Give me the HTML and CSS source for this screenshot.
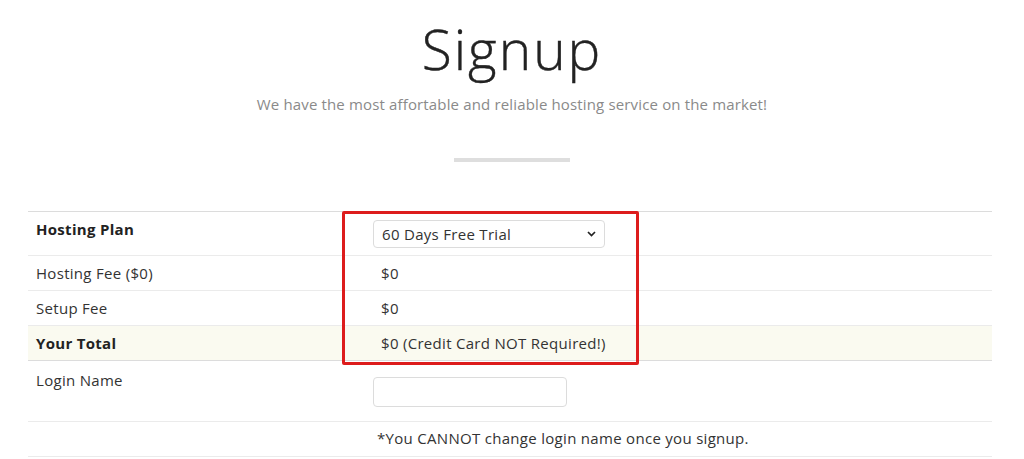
FILE: index.html
```html
<!DOCTYPE html>
<html lang="en">
<head>
<meta charset="utf-8">
<title>Signup</title>
<link rel="stylesheet" href="styles.css">
</head>
<body>
<header class="hero">
  <h1 class="title">Signup</h1>
  <p class="subtitle">We have the most affortable and reliable hosting service on the market!</p>
  <div class="divider"></div>
</header>
<main class="form-wrap">
  <table class="signup">
    <colgroup><col class="c1"><col class="c2"></colgroup>
    <tr class="row-plan">
      <th>Hosting Plan</th>
      <td>
        <div class="select">
          <span>60 Days Free Trial</span>
          <svg class="chev" width="9" height="6" viewBox="0 0 9 6"><path d="M1 1l3.5 3.5L8 1" fill="none" stroke="#222" stroke-width="1.7"/></svg>
        </div>
      </td>
    </tr>
    <tr>
      <td class="label">Hosting Fee ($0)</td>
      <td><span class="val">$0</span></td>
    </tr>
    <tr>
      <td class="label">Setup Fee</td>
      <td><span class="val">$0</span></td>
    </tr>
    <tr class="row-total">
      <th>Your Total</th>
      <td><span class="val">$0 (Credit Card NOT Required!)</span></td>
    </tr>
    <tr class="row-login">
      <td class="label">Login Name</td>
      <td><div class="input"></div></td>
    </tr>
    <tr class="row-note">
      <td class="label"></td>
      <td><span class="val note">*You CANNOT change login name once you signup.</span></td>
    </tr>
  </table>
  <div class="highlight"></div>
</main>
</body>
</html>
```

FILE: styles.css
```css
* { box-sizing: border-box; }
html, body { margin: 0; padding: 0; background: #fff; }
body {
  font-family: "Open Sans", "Liberation Sans", sans-serif;
  color: #333;
  font-size: 15px;
  letter-spacing: 0.3px;
}
.hero {
  display: flex;
  flex-direction: column;
  align-items: center;
  padding-top: 18px;
}
.title {
  margin: 0;
  font-weight: 300;
  font-size: 55px;
  line-height: 62px;
  color: #222;
  letter-spacing: 2px;
  -webkit-text-stroke: 0.4px #222;
}
.subtitle {
  margin: 14px 0 0;
  color: #8a8a8a;
  font-size: 15px;
  line-height: 20px;
  letter-spacing: 0.15px;
}
.divider {
  width: 116px;
  height: 4px;
  background: #dedede;
  margin-top: 44px;
}
.form-wrap {
  position: relative;
  margin: 49px 32px 0 28px;
}
.signup {
  width: 100%;
  border-collapse: collapse;
  border-top: 1px solid #dcdcdc;
}
.c1 { width: 337px; }
.signup th, .signup td {
  text-align: left;
  vertical-align: top;
  padding: 8px 8px;
  line-height: 18px;
  border-bottom: 1px solid #ebebeb;
  font-weight: 400;
}
.signup th { font-weight: 700; color: #222; }
.row-plan th, .row-plan td { padding: 7px 8px 7px; }
.row-plan th { padding-top: 8px; }
.row-plan .select { margin-top: 1px; }
.row-total th, .row-total td { background: #fafaf0; border-bottom-color: #dcdcdc; }
.val { display: inline-block; padding-left: 8px; }
.note { padding-left: 4px; }
.row-note td { padding: 7px 8px 9px; }
.select {
  width: 232px;
  height: 28px;
  border: 1px solid #dcdcdc;
  border-radius: 4px;
  display: flex;
  align-items: center;
  justify-content: space-between;
  padding: 0 8px 0 8px;
  color: #333;
  background: #fff;
}
.input {
  width: 194px;
  height: 30px;
  border: 1px solid #dcdcdc;
  border-radius: 4px;
  margin: 8px 0 6px;
  background: #fff;
}
.row-login td { padding-top: 8px; }
.row-login .label { padding-top: 10px; }
.highlight {
  position: absolute;
  left: 314px;
  top: 0;
  width: 297px;
  height: 154px;
  border: 3px solid #dd1c1c;
  border-radius: 2px;
  pointer-events: none;
}
```
